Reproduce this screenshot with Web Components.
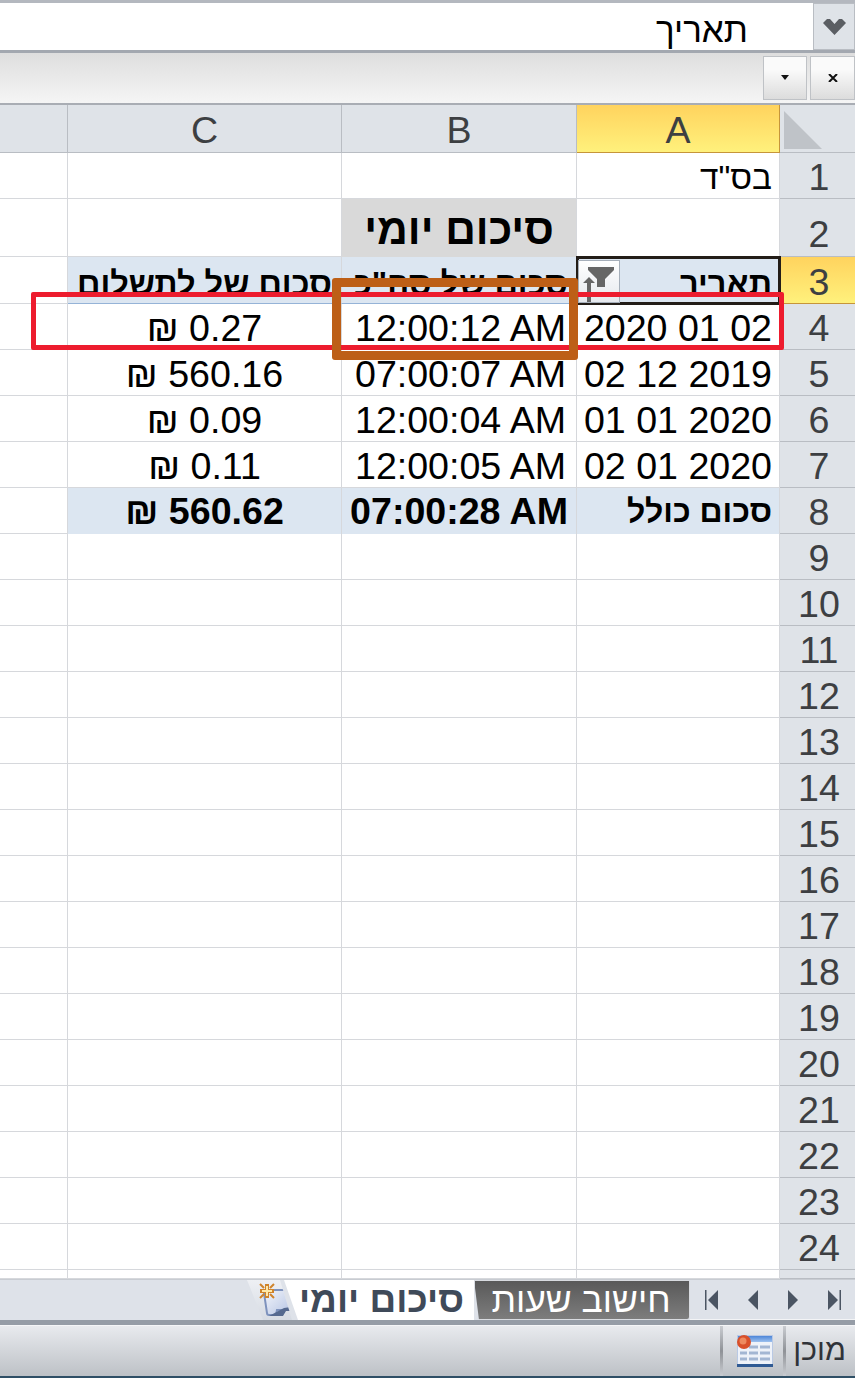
<!DOCTYPE html>
<html lang="he">
<head>
<meta charset="utf-8">
<title>סיכום יומי</title>
<style>
    html, body { margin: 0; height: 100%; }
    body {
        width: 855px;
        height: 1378px;
        overflow: hidden;
        display: flex;
        flex-direction: column;
        font-family: "Liberation Sans", Arial, sans-serif;
        background: #fff;
    }
</style>
</head>
<body>
<formula-bar>תאריך</formula-bar>
<ribbon-strip></ribbon-strip>
<sheet-grid>
    <sheet-mark style="left:31px;top:187px;width:753px;height:58px;border:5px solid #ed1c2e;border-radius:2px"></sheet-mark>
    <sheet-mark style="left:332px;top:173px;width:246px;height:82px;border:9px solid #bd5f17;border-radius:3px"></sheet-mark>
</sheet-grid>
<tab-bar></tab-bar>
<status-bar></status-bar>

<script>
class FormulaBar extends HTMLElement {
    constructor() {
        super();
        this.attachShadow({ mode: 'open' });
        this.shadowRoot.innerHTML = `
            <style>
                :host {
                    display: flex;
                    height: 53px;
                    box-sizing: border-box;
                    border-top: 3px solid #b4b8bf;
                    border-bottom: 3px solid #a3a8b0;
                    background: #fff;
                }
                .text {
                    flex: 1;
                    direction: rtl;
                    font-size: 35px;
                    line-height: 47px;
                    padding: 3px 65px 0 0;
                    box-sizing: border-box;
                    color: #000;
                    overflow: hidden;
                }
                .drop {
                    width: 42px;
                    box-sizing: border-box;
                    border: 1px solid #b9bdc3;
                    background: #dfe3e8;
                    display: flex;
                    align-items: center;
                    justify-content: center;
                }
            </style>
            <div class="text"><slot></slot></div>
            <div class="drop">
                <svg width="23" height="17" viewBox="0 0 23 17"><path d="M0 5l4-4h3l4.500 5 4.500-5h3l4 4-11.500 12z" fill="#5b5e63"/></svg>
            </div>
        `;
    }
}

class RibbonStrip extends HTMLElement {
    constructor() {
        super();
        this.attachShadow({ mode: 'open' });
        this.shadowRoot.innerHTML = `
            <style>
                :host {
                    display: flex;
                    justify-content: flex-end;
                    align-items: flex-start;
                    gap: 3px;
                    height: 52px;
                    box-sizing: border-box;
                    padding-top: 3px;
                    border-bottom: 2px solid #a9adb4;
                    background: linear-gradient(#dedede, #f5f5f5);
                }
                .btn {
                    width: 44px;
                    height: 44px;
                    box-sizing: border-box;
                    border: 1px solid #bfc2c6;
                    background: linear-gradient(#fafafa 30%, #dcdcdc);
                    display: flex;
                    align-items: center;
                    justify-content: center;
                }
                .btn:last-child { width: 45px; }
            </style>
            <div class="btn"><svg width="10" height="6" viewBox="0 0 10 6"><path d="M1 0h8L5 5z" fill="#111"/></svg></div>
            <div class="btn"><svg width="10" height="8" viewBox="0 0 10 8"><path d="M1 0l8 8M9 0L1 8" stroke="#111" stroke-width="2"/></svg></div>
        `;
    }
}

class SheetMark extends HTMLElement {
    constructor() {
        super();
        this.attachShadow({ mode: 'open' });
        this.shadowRoot.innerHTML = `
            <style>
                :host {
                    display: block;
                    position: absolute;
                    box-sizing: border-box;
                    z-index: 5;
                }
            </style>
        `;
    }
}

class SheetGrid extends HTMLElement {
    constructor() {
        super();
        this.attachShadow({ mode: 'open' });

        const rows = {
            1: { a: 'בס"ד', aClass: 'he' },
            2: { b: 'סיכום יומי', bClass: 'title' },
            3: { a: 'תאריך', b: 'סכום של סה"כ', c: 'סכום של לתשלום', head: true },
            4: { a: '2020 01 02', b: '12:00:12 AM', c: '₪ 0.27' },
            5: { a: '02 12 2019', b: '07:00:07 AM', c: '₪ 560.16' },
            6: { a: '01 01 2020', b: '12:00:04 AM', c: '₪ 0.09' },
            7: { a: '02 01 2020', b: '12:00:05 AM', c: '₪ 0.11' },
            8: { a: 'סכום כולל', b: '07:00:28 AM', c: '₪ 560.62', total: true }
        };

        let cells = `
            <div class="hd"></div>
            <div class="hd col">C</div>
            <div class="hd col">B</div>
            <div class="hd col on">A</div>
            <div class="hd corner"><svg width="38" height="38" viewBox="0 0 38 38"><path d="M0 0l38 38H0z" fill="#bfc3c8"/></svg></div>
        `;

        for (let n = 1; n <= 25; n++) {
            const r = rows[n] || {};
            const extra = r.head ? ' head' : r.total ? ' total' : '';
            const num = n === 25 ? '' : n;
            cells += `
                <div class="cell"></div>
                <div class="cell c${extra}"><span>${r.c || ''}</span></div>
                <div class="cell b${extra} ${r.bClass || ''}"><span>${r.b || ''}</span></div>
                <div class="cell a${extra} ${r.aClass || ''}"><span>${r.a || ''}</span>${r.head ? this.filterButton() : ''}</div>
                <div class="hd num ${n === 3 ? 'on' : ''} ${n === 2 ? 'low' : ''}">${num}</div>
            `;
        }

        this.shadowRoot.innerHTML = `
            <style>
                :host {
                    display: block;
                    position: relative;
                    height: 1174px;
                    overflow: hidden;
                    background: #fff;
                }
                .grid {
                    display: grid;
                    grid-template-columns: 68px 274px 235px 203px 75px;
                    grid-template-rows: 48px 46px 58px 47px repeat(21, 46px) 9px;
                    font-size: 37.600px;
                    color: #000;
                }
                .cell {
                    box-sizing: border-box;
                    border-right: 1px solid #d6d8dc;
                    border-bottom: 1px solid #d6d8dc;
                    display: flex;
                    align-items: center;
                    overflow: hidden;
                    white-space: nowrap;
                    padding-top: 4px;
                }
                .a { justify-content: flex-end; padding-right: 7px; }
                .b { justify-content: flex-end; padding-right: 10px; }
                .c { justify-content: center; }
                .he { font-size: 33.300px; }
                .hd {
                    box-sizing: border-box;
                    background: #dfe3e8;
                    border-right: 1px solid #b9bdc3;
                    border-bottom: 1px solid #b9bdc3;
                    color: #3d3f42;
                    font-size: 37.600px;
                    display: flex;
                    align-items: center;
                    justify-content: center;
                    overflow: hidden;
                    padding-top: 4px;
                }
                .num { border-right: 0; padding-left: 3px; }
                .low { align-items: flex-end; }
                .corner { border-right: 0; align-items: flex-end; justify-content: flex-start; padding: 0 0 3px 4px; }
                .on {
                    background: linear-gradient(#ffd35e, #fff17c);
                    border-color: #c6953a;
                    border-right: 1px solid #c6953a;
                }
                .num.on { border-right: 0; }
                .title {
                    background: #d9d9d9;
                    justify-content: center;
                    padding: 4px 0 0 0;
                    border-bottom: 0;
                    font-weight: bold;
                    font-size: 42.500px;
                    direction: rtl;
                }
                .head {
                    background: #dce6f1;
                    font-weight: bold;
                    font-size: 32.500px;
                    border-bottom: 1px solid #95b3d7;
                    direction: rtl;
                    align-items: flex-start;
                    padding-top: 0;
                }
                .head span {
                    display: block;
                    height: 35px;
                    overflow: hidden;
                    line-height: 44px;
                    margin-top: 5px;
                }
                .head.b { justify-content: flex-start; padding-left: 0; padding-right: 8px; }
                .head.a {
                    position: relative;
                    justify-content: flex-start;
                    padding-right: 7px;
                    overflow: visible;
                    outline: 3px solid #231d18;
                    outline-offset: -2px;
                    z-index: 2;
                }
                .total { background: #dce6f1; font-weight: bold; border-bottom: 0; padding-top: 0; }
                .total.b { padding-right: 8px; }
                .total.a { direction: rtl; justify-content: flex-start; font-size: 32px; }
                .filter {
                    position: absolute;
                    left: 1px;
                    top: 3px;
                    width: 42px;
                    height: 43px;
                    box-sizing: border-box;
                    border: 1px solid #a6afba;
                    background: linear-gradient(#fff, #e6e9ee);
                }
            </style>
            <div class="grid">${cells}</div>
            <slot></slot>
        `;
    }

    filterButton() {
        return `<div class="filter">
            <svg width="40" height="41" viewBox="0 0 40 41" style="display:block">
                <path d="M9 6h26v3l-9 9v8h-8v-8l-9-9z" fill="#666"/>
                <path d="M4 22l6-6 6 6h-4v19H8V22z" fill="#666"/>
            </svg>
        </div>`;
    }
}

class TabBar extends HTMLElement {
    constructor() {
        super();
        this.attachShadow({ mode: 'open' });
        this.shadowRoot.innerHTML = `
            <style>
                :host {
                    display: flex;
                    justify-content: flex-end;
                    height: 46px;
                    box-sizing: border-box;
                    border-top: 1px solid #c8ccd2;
                    border-bottom: 5px solid #959ca6;
                    background: #dee2e9;
                    color: #3f4a59;
                }
                .new {
                    width: 45px;
                    margin-right: -8px;
                    background: linear-gradient(#eef0f4, #d6dbe3);
                    clip-path: polygon(0 0, 33px 0, 45px 40px, 16px 40px);
                }
                .new svg { display: block; }
                .tab {
                    height: 40px;
                    box-sizing: border-box;
                    display: flex;
                    align-items: center;
                    justify-content: center;
                    direction: rtl;
                    white-space: nowrap;
                }
                .active {
                    width: 190px;
                    background: #fff;
                    font-weight: bold;
                    font-size: 37px;
                    clip-path: polygon(0 0, 100% 0, 100% 100%, 14px 100%);
                    padding-left: 5px;
                }
                .dark {
                    width: 216px;
                    background: linear-gradient(#595959, #7d7d7d);
                    color: #fff;
                    font-size: 35.500px;
                    border: 1px solid #d8dbe0;
                    border-radius: 0 0 3px 0;
                    clip-path: polygon(0 0, 100% 0, 100% 100%, 5px 100%);
                    padding-right: 2px;
                }
                .nav {
                    width: 165px;
                    height: 40px;
                    box-sizing: border-box;
                    display: flex;
                    align-items: center;
                    justify-content: space-between;
                    padding: 0 14px 0 15px;
                    border-bottom: 1px solid #f3f4f6;
                }
                .nav svg { display: block; }
            </style>
            <div class="new">
                <svg width="45" height="40" viewBox="0 0 45 40">
                    <defs>
                        <linearGradient id="doc" x1="0" y1="0" x2="1" y2="1">
                            <stop offset="0" stop-color="#f4f6fb"/>
                            <stop offset="1" stop-color="#b4c3e3"/>
                        </linearGradient>
                    </defs>
                    <path d="M17 13q0-3 3-3h20l4 17v3H30l-1 5H22q-2 0-2-2z" fill="url(#doc)" stroke="#7d92bd" stroke-width="2"/>
                    <path d="M22 36h14l3-5h5v-4l-7 1z" fill="#55698f"/>
                    <path d="M18 4h4v5h5v4h-5v5h-4v-5h-5V9h5z" fill="#d0842b"/>
                    <path d="M13 4l4 4M27 4l-4 4M13 18l4-4M27 18l-4-4" stroke="#d0842b" stroke-width="2"/>
                    <path d="M20 6v10M15 11h10" stroke="#ffe9a8" stroke-width="2"/>
                </svg>
            </div>
            <div class="tab active">סיכום יומי</div>
            <div class="tab dark">חישוב שעות</div>
            <div class="nav">
                <svg width="14" height="20" viewBox="0 0 14 20"><path d="M0 0h1.500v20H0zM13 0v20L3 10z" fill="#4b5563"/></svg>
                <svg width="12" height="20" viewBox="0 0 12 20"><path d="M11 0v20L1 10z" fill="#4b5563"/></svg>
                <svg width="12" height="20" viewBox="0 0 12 20"><path d="M1 0v20l10-10z" fill="#4b5563"/></svg>
                <svg width="14" height="20" viewBox="0 0 14 20"><path d="M12.500 0H14v20h-1.500zM1 0v20l10-10z" fill="#4b5563"/></svg>
            </div>
        `;
    }
}

class StatusBar extends HTMLElement {
    constructor() {
        super();
        this.attachShadow({ mode: 'open' });
        this.shadowRoot.innerHTML = `
            <style>
                :host {
                    display: flex;
                    justify-content: flex-end;
                    align-items: stretch;
                    height: 53px;
                    box-sizing: border-box;
                    border-top: 1px solid #f4f5f7;
                    border-bottom: 2px solid #2f4f66;
                    background: linear-gradient(#e8eaee, #bdc1c6);
                }
                .sep {
                    width: 3px;
                    background: linear-gradient(#c9ccd1, #8f9297, #c9ccd1);
                }
                .icon {
                    width: 60px;
                    box-sizing: border-box;
                    padding-left: 3px;
                    display: flex;
                    align-items: center;
                    justify-content: center;
                }
                .label {
                    width: 69px;
                    box-sizing: border-box;
                    direction: rtl;
                    font-size: 30.500px;
                    line-height: 46px;
                    color: #303339;
                    padding-right: 9px;
                }
            </style>
            <div class="sep"></div>
            <div class="icon">
                <svg width="36" height="32" viewBox="0 0 36 32">
                    <defs>
                        <linearGradient id="bar" x1="0" y1="0" x2="0" y2="1">
                            <stop offset="0" stop-color="#4d86d8"/>
                            <stop offset="1" stop-color="#9cc0ee"/>
                        </linearGradient>
                    </defs>
                    <rect x="0" y="0" width="36" height="32" fill="#b9c9e4"/>
                    <rect x="1" y="1" width="34" height="6" fill="url(#bar)"/>
                    <rect x="1" y="7" width="34" height="22" fill="#eef2f9"/>
                    <path d="M12 12h9M23 12h10M3 18h7M12 18h9M23 18h10M3 24h7M12 24h9M23 24h10" stroke="#a3b6d3" stroke-width="3"/>
                    <rect x="0" y="29" width="36" height="3" fill="#2f5a94"/>
                    <circle cx="7" cy="7" r="7" fill="#d9502a"/>
                    <circle cx="6" cy="6" r="3.500" fill="#ee8a5f"/>
                </svg>
            </div>
            <div class="sep"></div>
            <div class="label">מוכן</div>
        `;
    }
}

customElements.define('formula-bar', FormulaBar);
customElements.define('ribbon-strip', RibbonStrip);
customElements.define('sheet-mark', SheetMark);
customElements.define('sheet-grid', SheetGrid);
customElements.define('tab-bar', TabBar);
customElements.define('status-bar', StatusBar);
</script>
</body>
</html>
